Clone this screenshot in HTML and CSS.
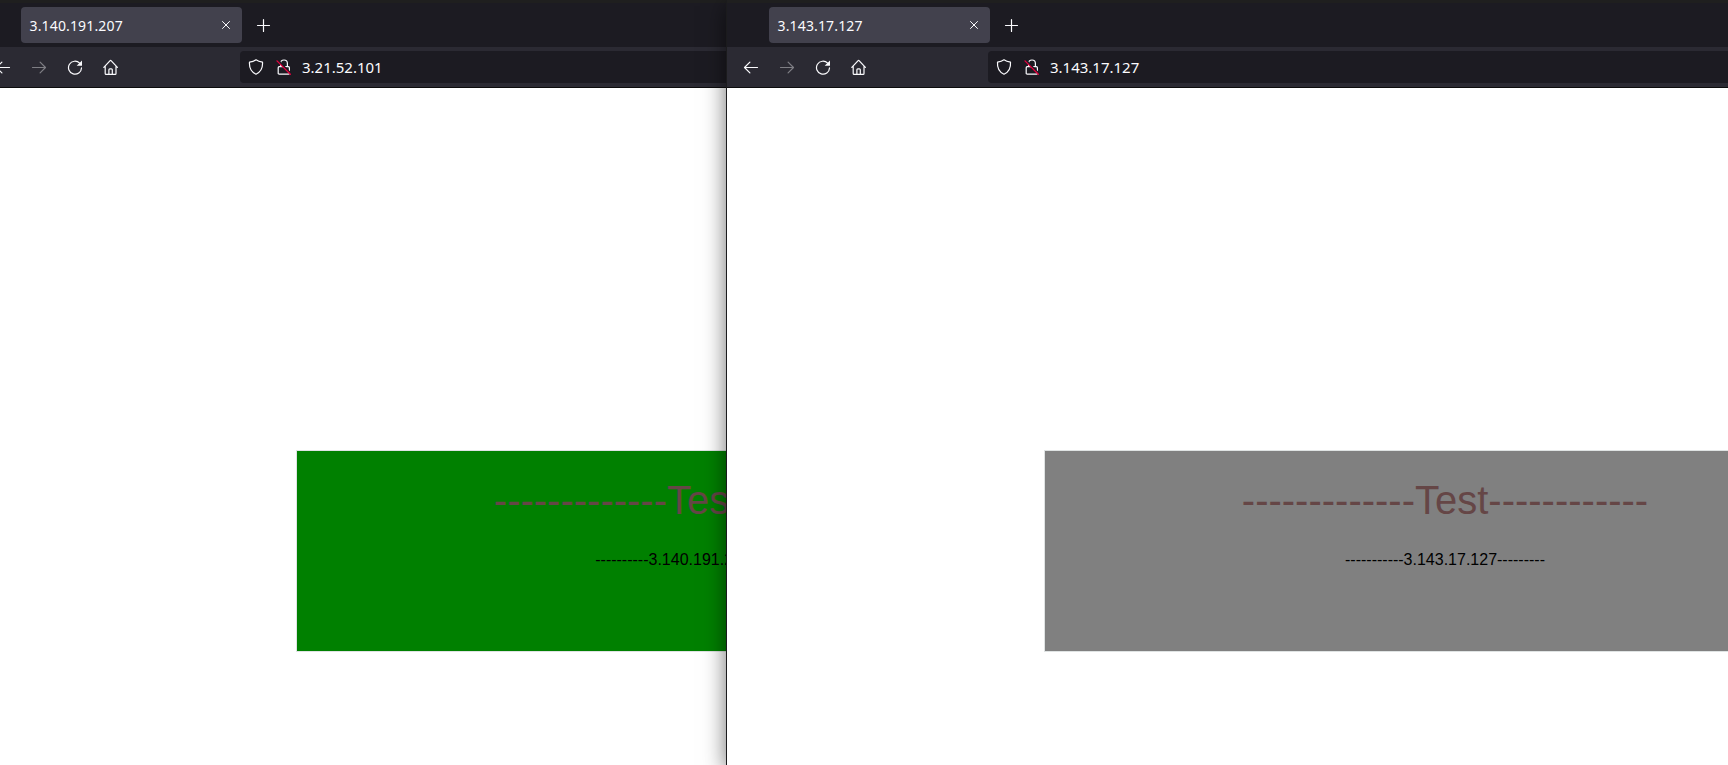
FILE: index.html
```html
<!DOCTYPE html>
<html lang="en">
<head>
<meta charset="utf-8">
<title>Browser windows</title>
<link rel="stylesheet" href="styles.css">
</head>
<body>
<svg class="symbols" aria-hidden="true">
  <symbol id="back" viewBox="0 0 16 16"><path d="M14.500 8.500H1.700M6.900 3.100 1.500 8.500l5.400 5.400"/></symbol>
  <symbol id="forward" viewBox="0 0 16 16"><path d="M1.500 8.500h12.800M9.100 3.100l5.400 5.400-5.400 5.400"/></symbol>
  <symbol id="reload" viewBox="0 0 16 16"><path d="M12.700 4.200A6.500 6.500 0 1 0 14.500 8.900"/><path class="solid" d="M15 1.500v5.300H9.700z"/></symbol>
  <symbol id="home" viewBox="0 0 16 16"><path d="M.8 8.300 6.900 1.800q.7-.7 1.400 0l6.100 6.500M2.200 7.300v7.100q0 .9.900.9h9q.9 0 .9-.9V7.300M5.900 15.300v-4.600q0-.9.900-.9h1.600q.9 0 .9.900v4.600"/></symbol>
  <symbol id="shield" viewBox="0 0 16 16"><path d="M8 .8C6 2.300 4 2.800 1.500 3.100c-.4 5.400 1.100 9.700 6.500 12.100 5.400-2.400 6.900-6.700 6.500-12.100C12 2.800 10 2.300 8 .8z"/></symbol>
  <symbol id="lock" viewBox="0 0 16 16"><path d="M4.600 7.700V4.400a3.400 3.400 0 0 1 6.800 0v3.300M3.200 7.700h9.200q1 0 1 1v5.500q0 1-1 1H3.200q-1 0-1-1V8.700q0-1 1-1z"/><path class="gap" d="M1.800 1.300 15 14.700"/><path class="slash" d="M1 1.900 14.300 15.300"/></symbol>
  <symbol id="close" viewBox="0 0 16 16"><path d="m4.500 4.500 7 7M11.500 4.500l-7 7"/></symbol>
  <symbol id="plus" viewBox="0 0 16 16"><path d="M8.500 2.500v12M2.500 8.500h12"/></symbol>
</svg>

<main class="desktop">
  <section class="window window-back">
    <header class="tabs">
      <div class="tab"><span>3.140.191.207</span><svg class="icon close"><use href="#close"/></svg></div>
      <svg class="icon plus"><use href="#plus"/></svg>
    </header>
    <nav class="toolbar">
      <div class="buttons">
        <svg class="icon"><use href="#back"/></svg>
        <svg class="icon disabled"><use href="#forward"/></svg>
        <svg class="icon"><use href="#reload"/></svg>
        <svg class="icon"><use href="#home"/></svg>
      </div>
      <div class="address">
        <svg class="icon"><use href="#shield"/></svg>
        <svg class="icon"><use href="#lock"/></svg>
        <span>3.21.52.101</span>
      </div>
    </nav>
    <div class="page">
      <div class="card green">
        <h1>-------------Test------------</h1>
        <p>----------3.140.191.207---------</p>
      </div>
    </div>
  </section>

  <section class="window window-front">
    <header class="tabs">
      <div class="tab"><span>3.143.17.127</span><svg class="icon close"><use href="#close"/></svg></div>
      <svg class="icon plus"><use href="#plus"/></svg>
    </header>
    <nav class="toolbar">
      <div class="buttons">
        <svg class="icon"><use href="#back"/></svg>
        <svg class="icon disabled"><use href="#forward"/></svg>
        <svg class="icon"><use href="#reload"/></svg>
        <svg class="icon"><use href="#home"/></svg>
      </div>
      <div class="address">
        <svg class="icon"><use href="#shield"/></svg>
        <svg class="icon"><use href="#lock"/></svg>
        <span>3.143.17.127</span>
      </div>
    </nav>
    <div class="page">
      <div class="card gray">
        <h1>-------------Test------------</h1>
        <p>-----------3.143.17.127---------</p>
      </div>
    </div>
  </section>
</main>
</body>
</html>
```
FILE: styles.css
```css
* { box-sizing: border-box; }
body { margin: 0; overflow: hidden; }
.symbols { display: none; }

.desktop {
  position: relative;
  height: 765px;
  overflow: hidden;
  background: #1f1f1f;
}

.window {
  position: absolute;
  top: 0;
  width: 1436px;
  height: 765px;
  background: #fff;
  font-family: "Noto Sans", "Open Sans", sans-serif;
}
.window-back { left: -21px; }
.window-front {
  left: 727px;
  box-shadow: 0 0 0 1px #1b1b1d, 0 6px 22px rgba(0, 0, 0, .6);
}

.tabs {
  display: flex;
  height: 47px;
  padding: 7px 0 0 42px;
  background: linear-gradient(#1f1f1f 3px, #1c1b22 3px);
}
.tab {
  display: flex;
  align-items: center;
  justify-content: space-between;
  width: 221px;
  height: 36px;
  padding: 0 8px 0 8.500px;
  border-radius: 4px;
  background: #42414d;
  color: #fbfbfe;
  font-size: 14px;
  letter-spacing: .15px;
}

.icon {
  flex: none;
  width: 16px;
  height: 16px;
  fill: none;
  stroke: #fbfbfe;
  stroke-width: 1.2;
  stroke-linecap: round;
  stroke-linejoin: round;
}
.close { stroke-width: 1; }
.plus { margin: 10px 0 0 13px; }
.disabled { opacity: .4; }
.solid { fill: #fbfbfe; stroke: none; }
.gap { stroke: #1c1b22; stroke-width: 2; }
.slash { stroke: #e7003f; stroke-width: 1.3; }

.toolbar {
  display: flex;
  height: 41px;
  padding: 4px 0 4px 16px;
  border-bottom: 1px solid #0c0c0d;
  background: #2b2a33;
}
.buttons {
  display: flex;
  align-items: center;
  gap: 20px;
  width: 245px;
}
.address {
  display: flex;
  flex: 1;
  align-items: center;
  padding-left: 8px;
  border-radius: 4px 0 0 4px;
  background: #1c1b22;
  color: #fbfbfe;
  font-size: 15px;
}
.address .icon + .icon { margin: 0 10px 0 12px; }

.page { padding: 362px 0 0 317px; }
.card {
  width: 802px;
  height: 202px;
  border: 1px solid #dfe3e3;
  font-family: "Liberation Sans", Arial, sans-serif;
  text-align: center;
}
.green { background: #008000; }
.gray { background: #808080; }
.card h1 {
  margin: 26px 0 0;
  color: #654646;
  font-size: 40px;
  font-weight: 400;
  line-height: 46px;
}
.card p {
  margin: 28px 0 0;
  color: #000;
  font-size: 16px;
  line-height: 18px;
}
```
